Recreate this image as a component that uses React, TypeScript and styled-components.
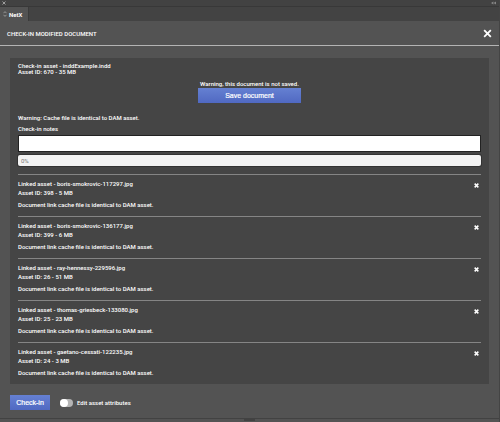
import React, { useState } from "react";
import styled, { createGlobalStyle } from "styled-components";

const GlobalStyle = createGlobalStyle`
  * { box-sizing: border-box; }
  body {
    margin: 0;
    background: #535353;
    color: #fff;
    font: 500 6px/9px Roboto, "Open Sans", sans-serif;
  }
  p, h1, h2, ul { margin: 0; padding: 0; font: inherit; }
  button, input { font: inherit; }
`;

const Window = styled.div`
  min-height: 100vh;
  display: flex;
  flex-direction: column;
  background: #535353;
  border-right: 1px solid #444;
`;

const TitleBar = styled.div`
  display: flex;
  align-items: center;
  justify-content: space-between;
  height: 7px;
  padding: 0 3px 0 2px;
  background: #424242;
  border-bottom: 1px solid #383838;
`;

const TabBar = styled.div`
  display: flex;
  height: 14px;
  background: #434343;
`;

const Tab = styled.button`
  display: flex;
  align-items: center;
  gap: 2px;
  width: 29px;
  padding: 0 0 0 3px;
  border: 0;
  border-right: 1px solid #3b3b3b;
  background: #535353;
  color: #fff;
  font-weight: 700;
`;

const Header = styled.header`
  display: flex;
  align-items: center;
  justify-content: space-between;
  height: 25px;
  padding: 0 7px;
  border-bottom: 1px solid #b4b4b4;
`;

const Title = styled.h1`
  font-weight: 500;
`;

const IconButton = styled.button<{ $size: number }>`
  display: block;
  flex: none;
  width: ${(p) => p.$size}px;
  height: ${(p) => p.$size}px;
  padding: 0;
  border: 0;
  background: none;
  color: #fff;
  line-height: 0;
`;

const Panel = styled.main`
  display: flex;
  flex-direction: column;
  margin: 12px 10px 0;
  padding: 5px 8px 0;
  background: #454545;
`;

const AssetInfo = styled.div`
  line-height: 6px;
`;

const SaveArea = styled.div`
  display: flex;
  flex-direction: column;
  align-items: center;
  margin: 4px 0 10px;
`;

const PrimaryButton = styled.button<{ $wide?: boolean }>`
  width: ${(p) => (p.$wide ? 103 : 40)}px;
  height: 15px;
  padding: 0;
  border: 0;
  background: linear-gradient(#6580d2, #5069c2);
  color: #fff;
  font: 400 7px/15px "Liberation Sans", sans-serif;
  -webkit-text-stroke: 0.2px #fff;
`;

const Label = styled.label`
  margin-top: 2px;
`;

const Notes = styled.input`
  width: 100%;
  height: 17px;
  margin-top: 2px;
  padding: 0 3px;
  border: 1px solid #222;
  background: #fff;
  color: #333;
`;

const Progress = styled.div`
  height: 11px;
  margin-top: 3px;
  padding: 0 3px;
  border-radius: 2px;
  background: #f3f3f3;
  box-shadow: 0 0 0 1px #333;
  color: #777;
  font-weight: 400;
  line-height: 11px;
`;

const AssetList = styled.ul`
  margin-top: 8px;
  list-style: none;
`;

const AssetRow = styled.li`
  display: flex;
  justify-content: space-between;
  height: 42px;
  padding: 4px 2px 0 0;
  border-top: 1px solid #858585;
`;

const RowAction = styled.div`
  padding-top: 4px;
`;

const Status = styled.p`
  margin-top: 3px;
`;

const Footer = styled.footer`
  display: flex;
  align-items: center;
  gap: 10px;
  padding: 11px 10px 0;
`;

const Toggle = styled.label`
  display: flex;
  align-items: center;
  gap: 4px;
`;

const Switch = styled.input`
  appearance: none;
  display: flex;
  width: 13px;
  height: 8px;
  margin: 0;
  border-radius: 4px;
  background: #b5b5b5;
  &::before {
    content: "";
    width: 8px;
    height: 8px;
    border-radius: 50%;
    background: #fff;
  }
  &:checked { justify-content: flex-end; background: #6580d2; }
`;

const Grip = styled.div`
  display: flex;
  justify-content: center;
  height: 4px;
  margin-top: auto;
  border-top: 1px solid #424242;
  &::after {
    content: "";
    width: 11px;
    height: 2px;
    background: #424242;
  }
`;

const Cross = ({ size, width }: { size: number; width: number }) => (
  <svg width={size} height={size} viewBox="0 0 10 10" aria-hidden="true">
    <path d="M1.3 1.3 8.7 8.7M8.7 1.3 1.3 8.7" stroke="currentColor" strokeWidth={width} fill="none" />
  </svg>
);

const assets = [
  { name: "boris-smokrovic-117297.jpg", id: 398, size: "5 MB" },
  { name: "boris-smokrovic-136177.jpg", id: 399, size: "6 MB" },
  { name: "ray-hennessy-229596.jpg", id: 26, size: "51 MB" },
  { name: "thomas-griesbeck-133080.jpg", id: 25, size: "23 MB" },
  { name: "gaetano-cessati-122235.jpg", id: 24, size: "3 MB" },
];

export default function App() {
  const [notes, setNotes] = useState("");
  const [edit, setEdit] = useState(false);
  return (
    <Window>
      <GlobalStyle />
      <TitleBar>
        <svg width="4" height="4" viewBox="0 0 4 4" aria-hidden="true">
          <path d="M.5.5 3.5 3.5M3.5.5.5 3.5" stroke="#b5b5b5" strokeWidth=".8" />
        </svg>
        <svg width="5" height="4" viewBox="0 0 5 4" aria-hidden="true">
          <path d="M2.4.5 0 2 2.4 3.5ZM5 .5 2.6 2 5 3.5Z" fill="#888" />
        </svg>
      </TitleBar>
      <TabBar role="tablist">
        <Tab role="tab" aria-selected="true">
          <svg width="4" height="6" viewBox="0 0 4 6" aria-hidden="true">
            <path d="M.5 2.2 2 .6 3.5 2.2M.5 3.8 2 5.4 3.5 3.8" stroke="#aaa" strokeWidth=".8" fill="none" />
          </svg>
          NetX
        </Tab>
      </TabBar>
      <Header>
        <Title>CHECK-IN MODIFIED DOCUMENT</Title>
        <IconButton $size={9} aria-label="Close">
          <Cross size={9} width={2} />
        </IconButton>
      </Header>
      <Panel>
        <AssetInfo>
          <p>Check-in asset - inddExample.indd</p>
          <p>Asset ID: 670 - 35 MB</p>
        </AssetInfo>
        <SaveArea>
          <p>Warning, this document is not saved.</p>
          <PrimaryButton $wide>Save document</PrimaryButton>
        </SaveArea>
        <p>Warning: Cache file is identical to DAM asset.</p>
        <Label htmlFor="notes">Check-in notes</Label>
        <Notes id="notes" value={notes} onChange={(e) => setNotes(e.target.value)} />
        <Progress role="progressbar" aria-valuenow={0} aria-label="Check-in progress">0%</Progress>
        <AssetList>
          {assets.map((a) => (
            <AssetRow key={a.id}>
              <div>
                <h2>Linked asset - {a.name}</h2>
                <p>Asset ID: {a.id} - {a.size}</p>
                <Status>Document link cache file is identical to DAM asset.</Status>
              </div>
              <RowAction>
                <IconButton $size={5} aria-label={`Remove ${a.name}`}>
                  <Cross size={5} width={3} />
                </IconButton>
              </RowAction>
            </AssetRow>
          ))}
        </AssetList>
      </Panel>
      <Footer>
        <PrimaryButton>Check-in</PrimaryButton>
        <Toggle>
          <Switch type="checkbox" role="switch" checked={edit} onChange={(e) => setEdit(e.target.checked)} />
          Edit asset attributes
        </Toggle>
      </Footer>
      <Grip />
    </Window>
  );
}
